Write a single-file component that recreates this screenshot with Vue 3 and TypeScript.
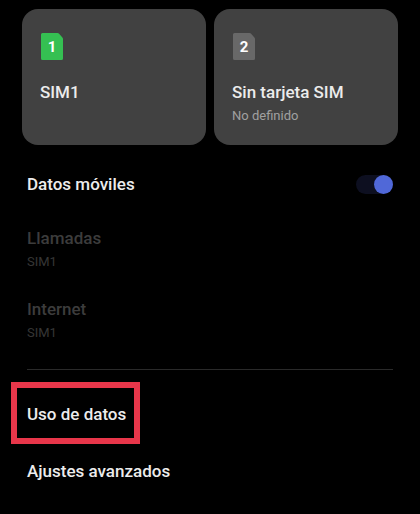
<script setup lang="ts">
import { ref } from 'vue'

interface SimCard {
  slot: number
  title: string
  subtitle?: string
  active: boolean
}

interface Preference {
  title: string
  value: string
}

const sims: SimCard[] = [
  { slot: 1, title: 'SIM1', active: true },
  { slot: 2, title: 'Sin tarjeta SIM', subtitle: 'No definido', active: false },
]

const preferences: Preference[] = [
  { title: 'Llamadas', value: 'SIM1' },
  { title: 'Internet', value: 'SIM1' },
]

const mobileData = ref(true)
</script>

<template>
  <main class="settings">
    <section class="sims">
      <button v-for="sim in sims" :key="sim.slot" type="button" class="sim">
        <svg class="sim-icon" :class="{ active: sim.active }" viewBox="0 0 22 27" aria-hidden="true">
          <path d="M1.5 0H16.5Q17.3 0 17.9 .6L21.4 4.6Q22 5.2 22 6V25.5Q22 27 20.5 27H1.5Q0 27 0 25.5V1.5Q0 0 1.5 0Z" />
          <text x="11" y="19" text-anchor="middle">{{ sim.slot }}</text>
        </svg>
        <span class="title">{{ sim.title }}</span>
        <span v-if="sim.subtitle" class="subtitle">{{ sim.subtitle }}</span>
      </button>
    </section>

    <section class="list">
      <label class="row">
        <span class="title">Datos móviles</span>
        <input v-model="mobileData" class="switch" type="checkbox" role="switch" />
      </label>
      <button v-for="item in preferences" :key="item.title" type="button" class="row double" disabled>
        <span class="title">{{ item.title }}</span>
        <span class="subtitle">{{ item.value }}</span>
      </button>
    </section>

    <hr class="divider" />

    <nav class="list">
      <a class="row" href="#uso"><span class="title marked">Uso de datos</span></a>
      <a class="row" href="#avanzados"><span class="title">Ajustes avanzados</span></a>
    </nav>
  </main>
</template>

<style>
body {
  margin: 0;
  background: #000;
}
</style>

<style scoped>
.settings {
  padding: 9px 0 13px;
  font-family: Roboto, "Liberation Sans", sans-serif;
  color: #ececec;
}

.sims {
  display: grid;
  grid-template-columns: 1fr 1fr;
  gap: 8px;
  padding: 0 22px;
  margin-bottom: 11px;
}

button {
  border: 0;
  background: none;
  font: inherit;
  color: inherit;
  text-align: left;
}

.sim {
  display: flex;
  flex-direction: column;
  align-items: flex-start;
  padding: 24px 18px 18px;
  border-radius: 16px;
  background: #414141;
}

.sim-icon {
  width: 22px;
  height: 27px;
  margin: 0 1px 21px;
  fill: #686868;
}

.sim-icon.active {
  fill: #35c052;
}

.sim-icon text {
  fill: #fff;
  font-size: 15px;
  font-weight: 700;
}

.title {
  font-size: 17px;
  font-weight: 500;
  line-height: 22px;
}

.subtitle {
  margin-top: 2px;
  font-size: 13px;
  line-height: 22px;
  color: #a0a0a0;
}

.list {
  display: flex;
  flex-direction: column;
}

.row {
  display: flex;
  align-items: center;
  justify-content: space-between;
  padding: 17px 27px 18px;
  color: inherit;
  text-decoration: none;
}

.double {
  flex-direction: column;
  align-items: flex-start;
  padding: 14px 27px 11px;
}

.double .title {
  color: #3c3c3c;
}

.double .subtitle {
  color: #363636;
}

.switch {
  appearance: none;
  display: flex;
  width: 37px;
  height: 19px;
  margin: 0;
  border-radius: 10px;
  background: #2a2a2a;
}

.switch::before {
  content: "";
  width: 19px;
  height: 19px;
  border-radius: 50%;
  background: #8a8a8a;
}

.switch:checked {
  justify-content: flex-end;
  background: #0d0f20;
}

.switch:checked::before {
  background: #5068d8;
}

.divider {
  height: 1px;
  margin: 14px 27px 16px;
  border: 0;
  background: #2a2a2a;
}

.marked {
  position: relative;
}

.marked::after {
  content: "";
  position: absolute;
  inset: -21px -14px -19px -16px;
  border: 6px solid #e8364a;
}
</style>
